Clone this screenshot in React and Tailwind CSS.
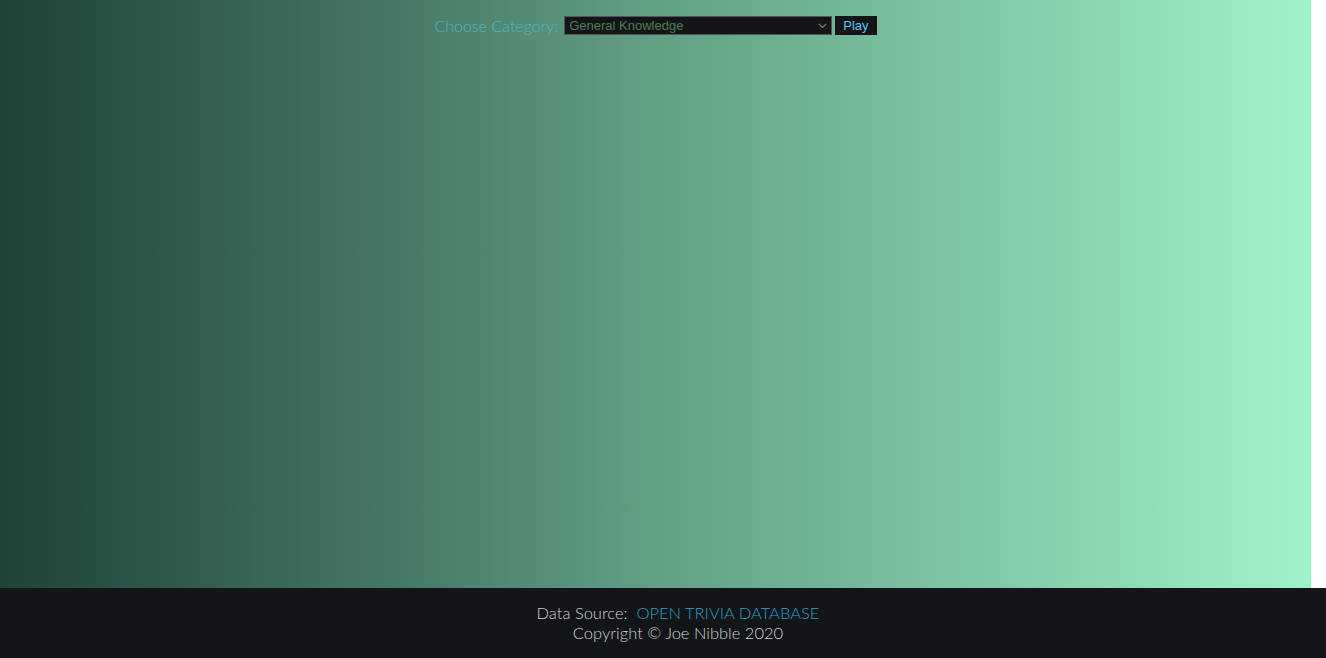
import React, { useState } from "react";

const categories = [
  "General Knowledge",
  "Entertainment: Books",
  "Entertainment: Film",
  "Entertainment: Music",
  "Science & Nature",
  "Science: Computers",
  "Mythology",
  "Sports",
  "Geography",
  "History",
];

const App = () => {
  const [category, setCategory] = useState(categories[0]);

  return (
    <div className="min-h-screen bg-white flex flex-col" style={{ fontFamily: "Lato, 'Open Sans', sans-serif" }}>
      <div className="flex">
        <main className="w-[1311px] h-[588px] bg-linear-to-r from-[#1f4239] via-[#62a084] to-[#9ff3c9]">
          <div className="flex items-center justify-center pt-[16px] gap-[3px]">
            <label className="text-[16px] font-light text-[#4fb6c6] leading-[19px] mr-[3px]">
              Choose Category:
            </label>
            <div className="relative h-[19px]">
              <select
                value={category}
                onChange={(e) => setCategory(e.target.value)}
                className="block appearance-none w-[268px] h-[19px] bg-[#131519] border border-[#555] text-[#4e7d50] text-[13px] leading-[17px] pl-[4px] outline-none"
                style={{ fontFamily: "'Liberation Sans', Arial, sans-serif" }}
              >
                {categories.map((c) => (
                  <option key={c} value={c}>
                    {c}
                  </option>
                ))}
              </select>
              <svg
                className="absolute right-[5px] top-[7px] pointer-events-none"
                width="9"
                height="6"
                viewBox="0 0 9 6"
                fill="none"
              >
                <path d="M1 1l3.5 3.5L8 1" stroke="#777" strokeWidth="1.2" />
              </svg>
            </div>
            <button
              className="h-[19px] px-[8px] bg-[#131519] text-[#5cc6ef] text-[13px] leading-[19px]"
              style={{ fontFamily: "'Liberation Sans', Arial, sans-serif" }}
            >
              Play
            </button>
          </div>
        </main>
        <div className="flex-1" />
      </div>
      <footer className="h-[70px] bg-[#131519] flex flex-col items-center pt-[15px] pl-[30px] text-[16.5px] font-light leading-[20px] text-[#d0d0d0]">
        <p>
          Data Source:&nbsp;{" "}
          <a href="#" className="text-[#2b9fc4]">
            OPEN TRIVIA DATABASE
          </a>
        </p>
        <p>Copyright © Joe Nibble 2020</p>
      </footer>
    </div>
  );
};

export default App;
